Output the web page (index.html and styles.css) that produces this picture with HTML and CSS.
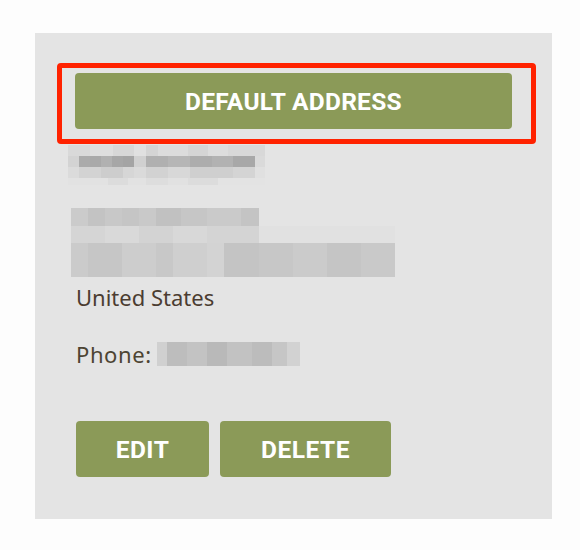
FILE: index.html
```html
<!DOCTYPE html>
<html>
<head>
<meta charset="utf-8">
<link rel="stylesheet" href="styles.css">
</head>
<body>
<div class="panel">
  <div class="highlight">
    <button class="btn btn-default">DEFAULT ADDRESS</button>
  </div>
  <div class="blur name-blur">
    <div class="nb-row nb-r1"></div>
    <div class="nb-row nb-r2"></div>
    <div class="nb-row nb-r3"></div>
    <div class="nb-row nb-r4"></div>
  </div>
  <div class="blur addr-blur">
    <div class="ab-row ab-r1"></div>
    <div class="ab-row ab-r2"></div>
    <div class="ab-row ab-r3"></div>
  </div>
  <p class="country">United States</p>
  <div class="phone">
    <span class="phone-label">Phone:</span>
    <span class="phone-blur"></span>
  </div>
  <div class="actions">
    <button class="btn btn-small btn-edit">EDIT</button>
    <button class="btn btn-small btn-delete">DELETE</button>
  </div>
</div>
</body>
</html>
```

FILE: styles.css
```css
html, body {
  margin: 0;
  padding: 0;
  background: #fdfdfd;
}

body {
  width: 580px;
  height: 550px;
  padding-top: 33px;
  padding-left: 35px;
  box-sizing: border-box;
}

.panel {
  width: 517px;
  height: 486px;
  box-sizing: border-box;
  background: #e4e4e4;
  padding: 30px 0 0 41px;
}

.highlight {
  margin-left: -19px;
  width: 479px;
  height: 81px;
  box-sizing: border-box;
  border: 5px solid #ff2200;
  border-radius: 4px;
  padding: 5px 0 0 13px;
}

.btn {
  font-family: Roboto, "Liberation Sans", sans-serif;
  font-weight: 700;
  font-size: 24.5px;
  letter-spacing: 0.5px;
  color: #ffffff;
  background: #8b9a58;
  border: none;
  border-radius: 4px;
  margin: 0;
  padding: 0;
  text-align: center;
  cursor: pointer;
}

.btn-default {
  display: block;
  width: 437px;
  height: 56px;
  font-size: 24.5px;
  letter-spacing: 0.3px;
}

.btn-small {
  height: 56px;
}

.btn-edit { width: 133px; }
.btn-delete { width: 171px; }

.blur {
  display: flex;
  flex-direction: column;
}

.name-blur {
  margin-top: 1px;
  margin-left: -8px;
  width: 197px;
  height: 40px;
}

.nb-row { width: 100%; }

.nb-r1 {
  height: 11px;
  background: linear-gradient(90deg,
    #d9d9d9 0 22px, #dedede 22px 45px, #d7d7d7 45px 66px,
    #e0e0e0 66px 78px, #d4d4d4 78px 90px, #dcdcdc 90px 120px,
    #d5d5d5 120px 140px, #dddddd 140px 160px, #d8d8d8 160px 197px);
}

.nb-r2 {
  height: 11px;
  background: linear-gradient(90deg,
    #d3d3d3 0 11px, #ababab 11px 22px, #a9a9a9 22px 33px,
    #b1b1b1 33px 44px, #a7a7a7 44px 55px, #a4a4a4 55px 66px,
    #d0d0d0 66px 78px, #b0b0b0 78px 100px, #b6b6b6 100px 122px,
    #adadad 122px 144px, #b2b2b2 144px 165px, #a8a8a8 165px 187px,
    #dadada 187px 197px);
}

.nb-r3 {
  height: 11px;
  background: linear-gradient(90deg,
    #dbdbdb 0 11px, #d3d3d3 11px 33px, #cdcdcd 33px 55px,
    #d6d6d6 55px 66px, #dadada 66px 78px, #d2d2d2 78px 100px,
    #d8d8d8 100px 122px, #cfcfcf 122px 165px, #d4d4d4 165px 187px,
    #e0e0e0 187px 197px);
}

.nb-r4 {
  height: 7px;
  background: linear-gradient(90deg,
    #e2e2e2 0 40px, #dcdcdc 40px 60px, #e2e2e2 60px 78px,
    #dddddd 78px 100px, #e1e1e1 100px 120px, #dcdcdc 120px 150px,
    #e3e3e3 150px 197px);
}

.addr-blur {
  margin-top: 23px;
  margin-left: -5px;
  width: 324px;
  height: 69px;
}

.ab-r1 {
  height: 18px;
  width: 188px;
  background: linear-gradient(90deg,
    #cbcbcb 0 17px, #c3c3c3 17px 34px, #c8c8c8 34px 51px,
    #c5c5c5 51px 68px, #c9c9c9 68px 85px, #c1c1c1 85px 110px,
    #c6c6c6 110px 136px, #cacaca 136px 170px, #c4c4c4 170px 188px);
}

.ab-r2 {
  height: 17px;
  background: linear-gradient(90deg,
    #d5d5d5 0 34px, #d9d9d9 34px 68px, #d3d3d3 68px 102px,
    #d8d8d8 102px 136px, #d4d4d4 136px 188px, #e1e1e1 188px 324px);
}

.ab-r3 {
  height: 34px;
  background: linear-gradient(90deg,
    #cbcbcb 0 17px, #c6c6c6 17px 51px, #cdcdcd 51px 85px,
    #c8c8c8 85px 102px, #cfcfcf 102px 136px, #d3d3d3 136px 153px,
    #c4c4c4 153px 188px, #c7c7c7 188px 222px, #cbcbcb 222px 256px,
    #c5c5c5 256px 290px, #c9c9c9 290px 324px);
}

.country {
  margin: 5px 0 0 0;
  font-family: "Noto Sans", "Open Sans", sans-serif;
  font-size: 22px;
  line-height: 30px;
  color: #4b3c31;
}

.phone {
  margin-top: 27px;
  display: flex;
  align-items: flex-start;
  font-family: "Noto Sans", "Open Sans", sans-serif;
  font-size: 22px;
  line-height: 30px;
  color: #4d4433;
}

.phone-label {
  letter-spacing: 0.6px;
}

.phone-blur {
  margin-top: 3px;
  margin-left: 5px;
  width: 143px;
  height: 24px;
  background: linear-gradient(90deg,
    #d0d0d0 0 10px, #bdbdbd 10px 30px, #c3c3c3 30px 50px,
    #b9b9b9 50px 70px, #c2c2c2 70px 95px, #bcbcbc 95px 115px,
    #c6c6c6 115px 130px, #d2d2d2 130px 143px);
}

.actions {
  margin-top: 52px;
  display: flex;
  gap: 11px;
}
```
